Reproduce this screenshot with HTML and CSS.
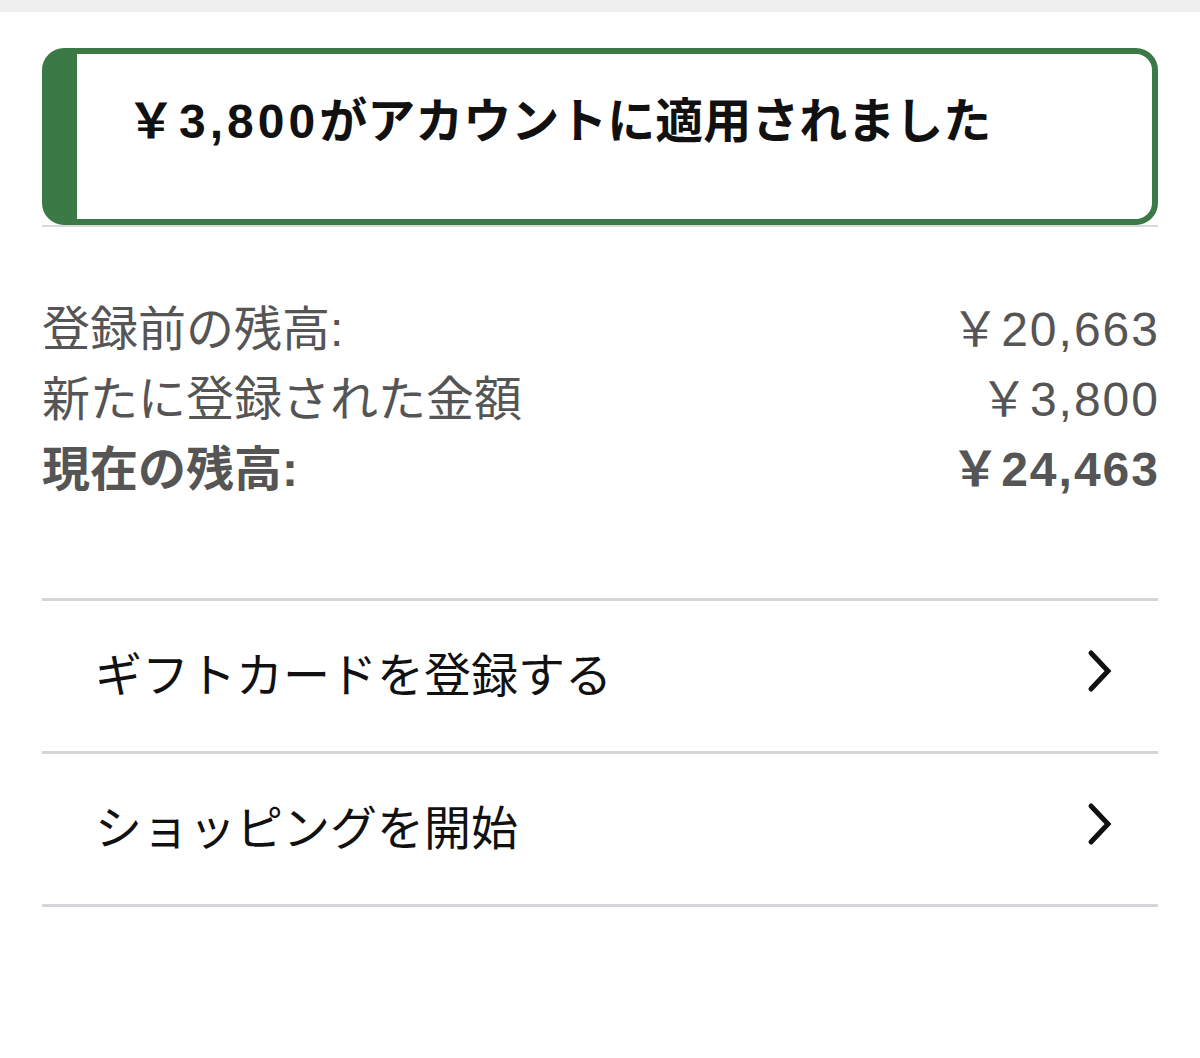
FILE: index.html
```html
<!DOCTYPE html>
<html lang="ja">
<head>
  <meta charset="UTF-8">
  <meta name="viewport" content="width=device-width, initial-scale=1.0">
  <title>ギフトカード</title>
  <link rel="stylesheet" href="styles.css">
</head>
<body>
  <div class="top-bar"></div>
  <main class="page">
    <div class="alert-box">
      <h2 class="alert-title"><span class="num">￥3,800</span>がアカウントに適用されました</h2>
    </div>

    <div class="balance">
      <div class="balance-row">
        <span>登録前の残高:</span>
        <span class="num">￥20,663</span>
      </div>
      <div class="balance-row">
        <span>新たに登録された金額</span>
        <span class="num">￥3,800</span>
      </div>
      <div class="balance-row total">
        <span>現在の残高:</span>
        <span class="num">￥24,463</span>
      </div>
    </div>

    <nav class="links">
      <a class="link-row" href="#">
        <span>ギフトカードを登録する</span>
        <svg class="chevron" viewBox="0 0 28 44" width="28" height="44">
          <path d="M5 4 L22 22 L5 40" fill="none" stroke="#111" stroke-width="5" stroke-linecap="round"/>
        </svg>
      </a>
      <a class="link-row" href="#">
        <span>ショッピングを開始</span>
        <svg class="chevron" viewBox="0 0 28 44" width="28" height="44">
          <path d="M5 4 L22 22 L5 40" fill="none" stroke="#111" stroke-width="5" stroke-linecap="round"/>
        </svg>
      </a>
    </nav>
  </main>
</body>
</html>
```

FILE: styles.css
```css
*{
  margin: 0;
  padding: 0;
  box-sizing: border-box;
  font-family: "Liberation Sans", "Noto Sans CJK JP", sans-serif;
}

body{
  background: #fff;
  width: 1200px;
}

.top-bar{
  height: 12px;
  background: #efefef;
}

.page{
  padding: 36px 42px 0;
}

.alert-box{
  height: 177px;
  border: 6px solid #3b7a47;
  border-left-width: 35px;
  border-radius: 22px;
  padding: 40px 0 0 50px;
}

.alert-title{
  font-size: 48px;
  font-weight: bold;
  line-height: 56px;
  color: #111;
}

/* 金額の数字は少し広めに */
.num{
  letter-spacing: 2px;
}

.alert-title .num{
  letter-spacing: 4px;
}

.balance{
  border-top: 2px solid #dadada;
  padding-top: 68px;
  padding-bottom: 93px;
}

.balance-row{
  display: flex;
  justify-content: space-between;
  font-size: 48px;
  line-height: 70px;
  color: #555;
}

.balance-row .num{
  margin-right: -2px;
}

.balance-row.total{
  font-weight: bold;
}

.links{
  border-top: 3px solid #d6d6da;
}

.link-row{
  display: flex;
  align-items: center;
  justify-content: space-between;
  height: 153px;
  padding: 0 44px 10px 53px;
  border-bottom: 3px solid #d6d6da;
  font-size: 47px;
  color: #111;
  text-decoration: none;
}

.chevron{
  display: block;
}
```
